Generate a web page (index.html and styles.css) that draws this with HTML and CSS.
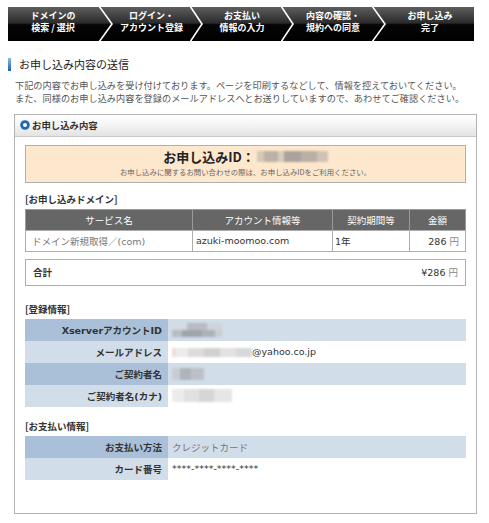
FILE: index.html
```html
<!DOCTYPE html>
<html lang="ja">
<head>
<meta charset="utf-8">
<title>お申し込み内容の送信</title>
<link rel="stylesheet" href="styles.css">
</head>
<body>
<div class="page">
  <nav class="steps">
    <div class="step">ドメインの<br>検索 / 選択</div>
    <svg class="chev" viewBox="0 0 15 34" preserveAspectRatio="none"><polyline points="1,-1 14,17 1,35" /></svg>
    <div class="step">ログイン・<br>アカウント登録</div>
    <svg class="chev" viewBox="0 0 13 34" preserveAspectRatio="none"><polyline points="0,-1 12,17 0,35" /></svg>
    <div class="step">お支払い<br>情報の入力</div>
    <svg class="chev" viewBox="0 0 13 34" preserveAspectRatio="none"><polyline points="0,-1 12,17 0,35" /></svg>
    <div class="step">内容の確認・<br>規約への同意</div>
    <svg class="chev" viewBox="0 0 14 34" preserveAspectRatio="none"><polyline points="0,-1 13,17 0,35" /></svg>
    <div class="step">お申し込み<br>完了</div>
  </nav>

  <h1 class="title"><span class="title-bar"></span>お申し込み内容の送信</h1>
  <p class="lead">下記の内容でお申し込みを受け付けております。ページを印刷するなどして、情報を控えておいてください。<br>また、同様のお申し込み内容を登録のメールアドレスへとお送りしていますので、あわせてご確認ください。</p>

  <section class="panel">
    <div class="panel-head">
      <svg class="ring" viewBox="0 0 10 10"><circle cx="5" cy="5" r="3.4" /></svg>
      <span>お申し込み内容</span>
    </div>
    <div class="panel-body">
      <div class="idbox">
        <div class="id-title">お申し込みID：<span class="blur blur-id"></span></div>
        <div class="id-note">お申し込みに関するお問い合わせの際は、お申し込みIDをご利用ください。</div>
      </div>

      <h2 class="sec-label sec-domain">[お申し込みドメイン]</h2>
      <table class="dtable">
        <colgroup><col class="c1"><col class="c2"><col class="c3"><col class="c4"></colgroup>
        <thead>
          <tr><th>サービス名</th><th>アカウント情報等</th><th>契約期間等</th><th>金額</th></tr>
        </thead>
        <tbody>
          <tr>
            <td class="d-name">ドメイン新規取得／(com)</td>
            <td class="d-acc">azuki-moomoo.com</td>
            <td class="d-term">1年</td>
            <td class="d-price">286 <span class="yen">円</span></td>
          </tr>
        </tbody>
      </table>

      <div class="total"><span class="total-label">合計</span><span>¥286 <span class="yen">円</span></span></div>

      <h2 class="sec-label sec-reg">[登録情報]</h2>
      <table class="itable">
        <colgroup><col class="ilabel"><col></colgroup>
        <tr class="odd"><th>XserverアカウントID</th><td><span class="blur blur-xid"></span></td></tr>
        <tr class="even"><th>メールアドレス</th><td><span class="blur blur-mail"></span>@yahoo.co.jp</td></tr>
        <tr class="odd"><th>ご契約者名</th><td><span class="blur blur-name"></span></td></tr>
        <tr class="even"><th>ご契約者名(カナ)</th><td><span class="blur blur-kana"></span></td></tr>
      </table>

      <h2 class="sec-label sec-pay">[お支払い情報]</h2>
      <table class="itable">
        <colgroup><col class="ilabel"><col></colgroup>
        <tr class="odd"><th>お支払い方法</th><td class="muted">クレジットカード</td></tr>
        <tr class="even"><th>カード番号</th><td>****-****-****-****</td></tr>
      </table>
    </div>
  </section>
</div>
</body>
</html>
```

FILE: styles.css
```css
html, body {
  margin: 0;
  padding: 0;
  background: #fff;
}

body {
  font-family: "DejaVu Sans", "Noto Sans CJK JP", sans-serif;
  color: #333;
  font-size: 9.5px;
}

.page {
  padding: 7px 12px 0 8px;
}

/* step navigation */
.steps {
  width: 466px;
  height: 34px;
  display: grid;
  grid-template-columns: 90px 15px 77px 13px 78px 13px 78px 14px 88px;
  background: linear-gradient(to bottom, #5e5e5e 0%, #2b2b2b 47%, #050505 52%, #000 100%);
}

.step {
  color: #fff;
  font-family: "Noto Sans CJK JP", sans-serif;
  font-weight: bold;
  font-size: 9px;
  line-height: 12px;
  text-align: center;
  padding-top: 3px;
  white-space: nowrap;
}

.chev {
  width: 100%;
  height: 34px;
  display: block;
}

.chev polyline {
  fill: none;
  stroke: #fff;
  stroke-width: 1.6;
}

/* title */
.title {
  margin: 16px 0 0 0;
  display: flex;
  align-items: center;
  gap: 8px;
  font-family: "Noto Sans CJK JP", sans-serif;
  font-size: 11px;
  font-weight: normal;
  line-height: 14px;
  color: #222;
}

.title-bar {
  width: 3px;
  height: 13px;
  background: linear-gradient(to bottom, #8cbbe8, #1f5ea8);
}

.lead {
  margin: 8px 0 0 7px;
  font-family: "Noto Sans CJK JP", sans-serif;
  font-size: 9.2px;
  line-height: 13.4px;
  color: #555;
  white-space: nowrap;
}

/* panel */
.panel {
  margin: 8px 0 0 6px;
  width: 463px;
  box-sizing: border-box;
  border: 1px solid #b3b3b3;
}

.panel-head {
  height: 22px;
  box-sizing: border-box;
  border-bottom: 1px solid #c8c8c8;
  background: linear-gradient(to bottom, #ffffff 0%, #f4f4f4 50%, #e3e3e3 100%);
  display: flex;
  align-items: center;
  padding-left: 5px;
  gap: 2px;
  font-family: "Noto Sans CJK JP", sans-serif;
  font-weight: bold;
  font-size: 9.4px;
  color: #333;
}

.ring {
  width: 10px;
  height: 10px;
  display: block;
}

.ring circle {
  fill: #fff;
  stroke: #2268b6;
  stroke-width: 2.8;
}

.panel-body {
  padding: 8px 10px 33px 10px;
}

/* id box */
.idbox {
  height: 38px;
  box-sizing: border-box;
  border: 1px solid #b0b0b0;
  background: #fee8cd;
  text-align: center;
  padding-top: 3px;
}

.id-title {
  font-family: "Noto Sans CJK JP", sans-serif;
  font-weight: bold;
  font-size: 13px;
  line-height: 16px;
  color: #222;
  display: flex;
  justify-content: center;
  align-items: center;
}

.id-note {
  margin-top: 2px;
  font-family: "Noto Sans CJK JP", sans-serif;
  font-size: 7.4px;
  line-height: 10px;
  color: #666;
}

.blur {
  display: inline-block;
  vertical-align: middle;
  filter: blur(1px);
}

.blur-id {
  width: 71px;
  height: 11px;
  margin-left: 2px;
  background: linear-gradient(to right, #d5c8b8 0 10%, #bcb1a6 10% 30%, #d8ccbc 30% 38%, #aaa39d 38% 62%, #b9afa5 62% 84%, #cfc3b4 84% 100%);
}

.blur-xid {
  width: 50px;
  height: 14px;
  background:
    linear-gradient(to right, #d6dbe3 0 30%, #b7bcc5 30% 70%, #cfd4dc 70% 100%) top / 100% 50% no-repeat,
    linear-gradient(to right, #b8bdc5 0 20%, #9fa4ad 20% 60%, #aeb3bb 60% 85%, #c8cdd5 85% 100%) bottom / 100% 50% no-repeat;
}

.blur-mail {
  width: 80px;
  height: 9px;
  background: linear-gradient(to right, #f3d9dc 0 5%, #ececec 5% 20%, #dcdcdc 20% 40%, #d0d0d0 40% 60%, #e2e2e2 60% 80%, #d8d8d8 80% 100%);
}

.blur-name {
  width: 32px;
  height: 12px;
  background: linear-gradient(to right, #c8cdd5 0 25%, #aeb3bc 25% 60%, #bcc1c9 60% 100%);
}

.blur-kana {
  width: 60px;
  height: 13px;
  background: linear-gradient(to right, #ececec 0 20%, #e0e0e0 20% 45%, #d6d6d6 45% 70%, #e6e6e6 70% 100%);
}

/* section labels */
.sec-label {
  margin: 0 0 4px 0;
  font-family: "Noto Sans CJK JP", sans-serif;
  font-size: 9.5px;
  font-weight: bold;
  line-height: 12px;
  color: #333;
}

.sec-domain { margin-top: 10px; }
.sec-reg { margin-top: 17px; }
.sec-pay { margin-top: 13px; }

/* domain table */
.dtable {
  width: 100%;
  border-collapse: collapse;
  table-layout: fixed;
}

.dtable .c1 { width: 167px; }
.dtable .c2 { width: 140px; }
.dtable .c3 { width: 77px; }

.dtable th,
.dtable td {
  height: 20px;
  padding: 0;
  border: 1px solid #adadad;
  font-size: 9.5px;
  white-space: nowrap;
}

.dtable th {
  background: #666;
  color: #fff;
  font-weight: normal;
  font-family: "Noto Sans CJK JP", sans-serif;
  border-color: #9a9a9a #9a9a9a #adadad #9a9a9a;
}

.d-name { color: #777; padding-left: 6px !important; }
.d-acc { padding-left: 3px !important; }
.d-term { padding-left: 2px !important; }
.d-price { text-align: right; padding-right: 6px !important; }

.yen { color: #888; }

/* total */
.total {
  margin-top: 7px;
  height: 27px;
  box-sizing: border-box;
  border: 1px solid #adadad;
  padding: 0 7px;
  display: flex;
  justify-content: space-between;
  align-items: center;
}

.total-label {
  font-family: "Noto Sans CJK JP", sans-serif;
  font-weight: bold;
}

/* info tables */
.itable {
  width: 100%;
  border-collapse: collapse;
  table-layout: fixed;
}

.itable .ilabel { width: 143px; }

.itable th,
.itable td {
  height: 22px;
  padding: 0;
  font-size: 9.5px;
  white-space: nowrap;
}

.itable th {
  text-align: right;
  padding-right: 6px;
  font-weight: bold;
  color: #333;
}

.itable td {
  text-align: left;
  padding-left: 4px;
  color: #333;
}

.itable .odd th { background: #aac0d8; }
.itable .odd td { background: #d1dde8; }
.itable .even th { background: #d1dde8; }
.itable .even td { background: #fff; }

.muted { color: #777 !important; }
```
